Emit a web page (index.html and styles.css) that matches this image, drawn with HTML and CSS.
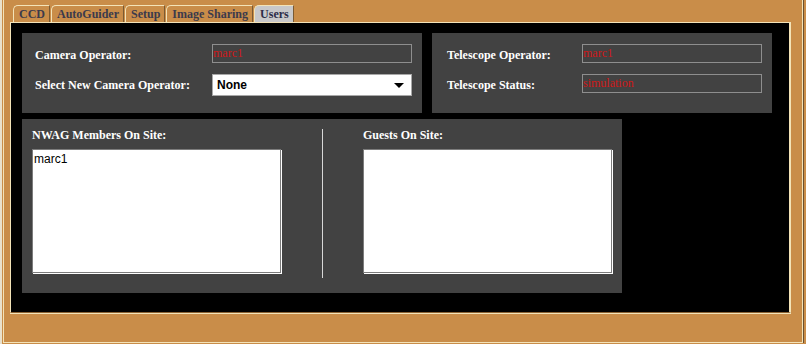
FILE: index.html
```html
<!DOCTYPE html>
<html lang="en">
	<head>
	<title>Users</title>
	<link rel="stylesheet" href="styles.css">
	</head>

	<body>
	<div class="window">

		<!-- Tab strip -->
		<div class="tabs">
			<div class="tab">CCD</div>
			<div class="tab">AutoGuider</div>
			<div class="tab">Setup</div>
			<div class="tab">Image Sharing</div>
			<div class="tab tab-active">Users</div>
		</div>

		<!-- Users page -->
		<div class="page">
			<div class="row-top">
				<div class="panel panel-camera">
					<label class="label">Camera Operator:</label>
					<div class="field">marc1</div>
					<label class="label label-select">Select New Camera Operator:</label>
					<div class="select">
						<span>None</span>
						<svg class="arrow" width="10" height="5" viewBox="0 0 10 5"><polygon points="0,0 10,0 5,5" fill="#000"/></svg>
					</div>
				</div>
				<div class="panel panel-scope">
					<label class="label">Telescope Operator:</label>
					<div class="field">marc1</div>
					<label class="label">Telescope Status:</label>
					<div class="field">simulation</div>
				</div>
			</div>

			<div class="panel panel-people">
				<div class="column">
					<div class="title">NWAG Members On Site:</div>
					<div class="list">
						<div class="list-item">marc1</div>
					</div>
				</div>
				<div class="divider"></div>
				<div class="column">
					<div class="title">Guests On Site:</div>
					<div class="list"></div>
				</div>
			</div>
		</div>

	</div>
	</body>
</html>
```

FILE: styles.css
```css
body {
	margin: 0;
	height: 344px;
	box-sizing: border-box;
	background-color: #c98d49;
	border-left: 2px solid #e9e1cc;
	font: bold 12px "Liberation Serif", "Times New Roman", serif;
	overflow: hidden;
}

.window {
	margin-left: 1px;
	width: 800px;
	height: 343px;
	box-sizing: border-box;
	padding-left: 6px;
	border-left: 1px solid #f3e3b8;
	border-right: 1px solid #f3e3b8;
	border-bottom: 1px solid #f3e3b8;
	box-shadow: 1px 0 0 #6b5030;
}

/* tabs */

.tabs {
	display: flex;
	gap: 1px;
	padding: 5px 0 0 3px;
	height: 17px;
}

.tab {
	padding: 0 4px 0 5px;
	line-height: 16px;
	color: #3b3a4c;
	border-top: 1px solid #f3e3b8;
	border-left: 1px solid #f3e3b8;
	border-right: 1px solid #7a5a32;
	border-top-left-radius: 5px;
}

.tab-active {
	background-color: #c8c8ca;
	color: #2c2c48;
}

/* page */

.page {
	width: 767px;
	height: 279px;
	padding: 10px 0 0 11px;
	background-color: #000;
	border-top: 1px solid #f3e3b8;
	border-left: 1px solid #f3e3b8;
	border-right: 2px solid #f3e3b8;
	border-bottom: 1px solid #8a6233;
	box-shadow: 0 1px 0 #f3e3b8;
}

.row-top {
	display: flex;
	gap: 10px;
	margin-bottom: 6px;
}

.panel {
	background-color: #424242;
	box-sizing: border-box;
}

.panel-camera,
.panel-scope {
	display: grid;
	row-gap: 11px;
	align-content: start;
	height: 80px;
	padding-top: 11px;
}

.panel-camera {
	width: 400px;
	padding-left: 13px;
	grid-template-columns: 177px 200px;
	grid-template-rows: 19px 22px;
}

.panel-scope {
	width: 340px;
	padding-left: 15px;
	grid-template-columns: 135px 180px;
	grid-template-rows: 19px 19px;
}

.label {
	color: #fff;
	align-self: center;
	padding-top: 4px;
}

.label-select {
	padding-top: 0;
}

.field {
	border: 1px solid #8e8e8e;
	color: #d01818;
	font: normal 12px "Liberation Serif", "Times New Roman", serif;
	line-height: 17px;
}

.select {
	display: flex;
	align-items: center;
	justify-content: space-between;
	background-color: #fff;
	border: 1px solid #a8a8a8;
	padding: 0 7px 0 4px;
	font: bold 12px "Liberation Sans", Arial, sans-serif;
	color: #000;
}

/* people on site */

.panel-people {
	display: flex;
	width: 600px;
	height: 174px;
	padding: 9px 0 0 10px;
}

.column {
	width: 250px;
}

.title {
	color: #fff;
	line-height: 14px;
	margin-bottom: 7px;
}

.list {
	width: 249px;
	height: 124px;
	box-sizing: border-box;
	background-color: #fff;
	border: 1px solid #7c7c7c;
	box-shadow: 1px 1px 0 #fff;
	padding: 2px 1px;
}

.list-item {
	font: normal 12px "Liberation Sans", Arial, sans-serif;
	line-height: 15px;
	color: #000;
}

.divider {
	width: 1px;
	height: 149px;
	margin: 1px 40px 0 40px;
	background-color: #d8d8d8;
}
```
